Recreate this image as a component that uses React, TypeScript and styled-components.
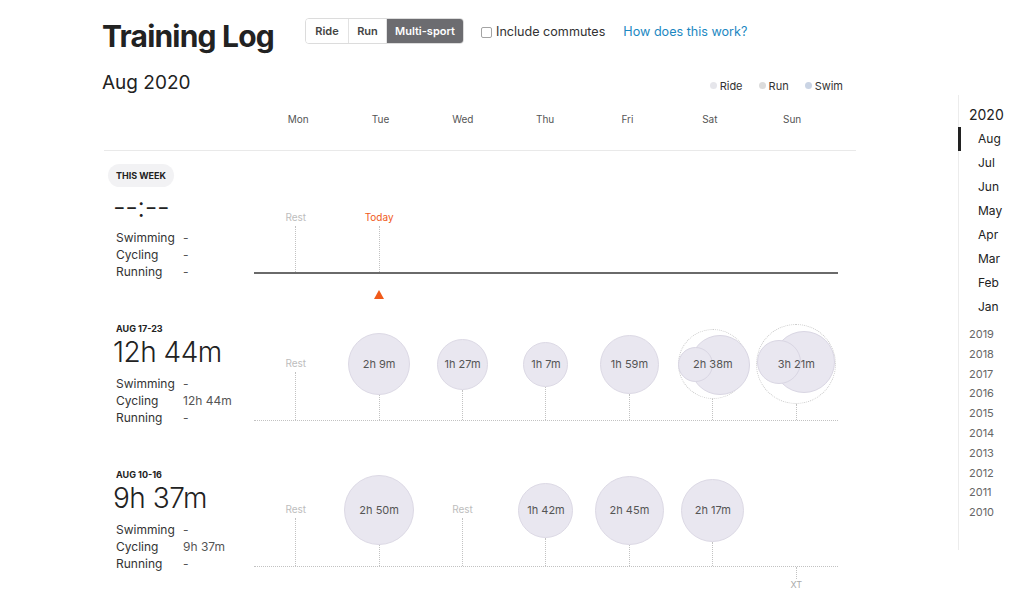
import React from 'react';
import styled, { createGlobalStyle } from 'styled-components';

const GlobalStyle = createGlobalStyle`
  html, body { margin: 0; padding: 0; background: #fff; }
  body { font-family: Inter, "Noto Sans", sans-serif; color: #333; -webkit-font-smoothing: antialiased; }
  * { box-sizing: border-box; }
`;

const Page = styled.div`
  display: flex;
  width: 1024px;
  height: 594px;
  overflow: hidden;
`;

const Main = styled.main`
  flex: none;
  width: 856px;
  margin-left: 102px;
`;

const TitleRow = styled.div`
  display: flex;
  align-items: flex-start;
  padding-top: 16px;
  height: 56px;
`;

const Title = styled.h1`
  flex: 0 0 203px;
  margin: 0;
  font-size: 30px;
  line-height: 40px;
  font-weight: 700;
  letter-spacing: -0.8px;
  color: #222;
  white-space: nowrap;
`;

const Tabs = styled.div`
  display: flex;
  margin-top: 2px;
  height: 26px;
  border: 1px solid #dcdcdc;
  border-radius: 4px;
  overflow: hidden;
`;

const Tab = styled.button<{ $active?: boolean; $w: number }>`
  width: ${p => p.$w}px;
  border: none;
  border-left: 1px solid #e2e2e2;
  &:first-child { border-left: none; }
  background: ${p => (p.$active ? '#6c6c70' : '#fff')};
  color: ${p => (p.$active ? '#fff' : '#444')};
  font-family: inherit;
  font-size: 11px;
  font-weight: 600;
  padding: 0;
`;

const Check = styled.label`
  display: flex;
  align-items: center;
  margin: 8px 0 0 17px;
  font-size: 12.6px;
  line-height: 16px;
  color: #333;
`;

const Box = styled.span`
  width: 11px;
  height: 11px;
  border: 1px solid #a4a4a4;
  border-radius: 2px;
  margin-right: 4px;
`;

const HelpLink = styled.a`
  margin: 8px 0 0 18px;
  font-size: 12.6px;
  line-height: 16px;
  color: #1c88c2;
  text-decoration: none;
`;

const MonthRow = styled.div`
  display: flex;
  justify-content: space-between;
  align-items: baseline;
  margin-top: 15px;
  padding-right: 13px;
  width: 754px;
`;

const MonthTitle = styled.h2`
  margin: 0;
  font-size: 19px;
  line-height: 24px;
  font-weight: 400;
  color: #222;
`;

const Legend = styled.div`
  display: flex;
  gap: 16px;
  font-size: 11px;
  color: #333;
`;

const LegendItem = styled.span`
  display: flex;
  align-items: center;
  gap: 3px;
`;

const Dot = styled.span<{ $c: string }>`
  width: 7px;
  height: 7px;
  border-radius: 50%;
  background: ${p => p.$c};
`;

const DaysRow = styled.div`
  display: grid;
  grid-template-columns: repeat(7, 82.33px);
  margin-left: 2px;
  width: 752px;
  padding: 17px 0 24px 153px;
  border-bottom: 1px solid #e9e9e9;
  font-size: 10px;
  line-height: 14px;
  color: #555;
  text-align: center;
`;

const WeekBlock = styled.section<{ $h: number }>`
  display: grid;
  grid-template-columns: 150px 584px;
  align-items: start;
  margin-left: 2px;
  height: ${p => p.$h}px;
`;

const Summary = styled.div<{ $top: number }>`
  padding: ${p => p.$top}px 0 0 12px;
`;

const Pill = styled.div`
  display: inline-block;
  margin-left: -8px;
  padding: 0 8px;
  height: 23px;
  line-height: 23px;
  border-radius: 12px;
  background: #f2f2f4;
  font-size: 9px;
  font-weight: 700;
  color: #222;
  text-transform: uppercase;
`;

const RangeLabel = styled.div`
  font-size: 9px;
  line-height: 11px;
  font-weight: 700;
  color: #222;
  text-transform: uppercase;
`;

const BigTime = styled.div<{ $mt: number }>`
  margin-top: ${p => p.$mt}px;
  margin-left: -3px;
  font-size: 28px;
  line-height: 32px;
  font-weight: 300;
  color: #222;
  letter-spacing: -0.5px;
`;

const Stats = styled.div<{ $mt: number }>`
  display: grid;
  grid-template-columns: 67px auto;
  margin-top: ${p => p.$mt}px;
  font-size: 12px;
  line-height: 17px;
  color: #333;
`;

const StatValue = styled.span`
  color: #555;
`;

const Chart = styled.div``;

const Zone = styled.div<{ $h: number; $solid?: boolean }>`
  display: grid;
  grid-template-columns: repeat(7, 1fr);
  height: ${p => p.$h}px;
  border-bottom: ${p => (p.$solid ? '2px solid #6a6a6a' : '1px dotted #c2c2c2')};
`;

const TopCol = styled.div`
  display: flex;
  flex-direction: column;
  align-items: center;
  padding-top: 59px;
`;

const MidCol = styled.div`
  display: grid;
  grid-template-rows: 1fr auto 1fr;
  justify-items: center;
  height: 100%;
`;

const Stem = styled.div<{ $h?: number }>`
  width: 0;
  height: ${p => (p.$h ? `${p.$h}px` : '100%')};
  flex: ${p => (p.$h ? 'none' : '1')};
  border-left: 1px dotted #c2c2c2;
`;

const DayLabel = styled.div<{ $today?: boolean }>`
  font-size: 10px;
  line-height: 14px;
  color: ${p => (p.$today ? '#f05a1a' : '#bdbdbd')};
  margin-bottom: 2px;
`;

const Bubble = styled.div<{ $d: number }>`
  display: flex;
  align-items: center;
  justify-content: center;
  width: ${p => p.$d}px;
  height: ${p => p.$d}px;
  border-radius: 50%;
  background: #e9e7f0;
  border: 1px solid #dcd9e5;
  font-size: 11px;
  color: #555;
  white-space: nowrap;
`;

const Cluster = styled.div<{ $d: number }>`
  position: relative;
  width: ${p => p.$d}px;
  height: ${p => p.$d}px;
  border-radius: 50%;
  border: 1px dotted #c8c8c8;
`;

const ClusterPart = styled.div<{ $d: number; $x: number; $y: number }>`
  position: absolute;
  left: ${p => p.$x}px;
  top: ${p => p.$y}px;
  width: ${p => p.$d}px;
  height: ${p => p.$d}px;
  border-radius: 50%;
  background: #e9e7f0;
  border: 1px solid #d9d6e3;
`;

const ClusterText = styled.div`
  position: absolute;
  inset: 0;
  display: flex;
  align-items: center;
  justify-content: center;
  font-size: 11px;
  color: #555;
  white-space: nowrap;
`;

const Below = styled.div<{ $mt: number }>`
  display: grid;
  grid-template-columns: repeat(7, 1fr);
  margin-top: ${p => p.$mt}px;
`;

const BelowCol = styled.div`
  display: flex;
  flex-direction: column;
  align-items: center;
`;

const Triangle = styled.div`
  width: 0;
  height: 0;
  border-left: 5.5px solid transparent;
  border-right: 5.5px solid transparent;
  border-bottom: 9px solid #f05a1a;
`;

const XT = styled.div`
  font-size: 9px;
  line-height: 12px;
  color: #aaa;
`;

const Sidebar = styled.nav`
  flex: none;
  width: 66px;
  height: 455px;
  margin-top: 95px;
  padding-top: 11px;
  border-left: 1px solid #ececec;
`;

const YearHead = styled.div`
  padding-left: 10px;
  font-size: 14px;
  line-height: 18px;
  color: #222;
`;

const MonthList = styled.ul`
  list-style: none;
  margin: 3px 0 0;
  padding: 0;
`;

const MonthItem = styled.li<{ $active?: boolean }>`
  margin-left: -1px;
  padding-left: 17px;
  border-left: 3px solid ${p => (p.$active ? '#222' : 'transparent')};
  font-size: 12px;
  line-height: 24px;
  color: #222;
`;

const YearList = styled.ul`
  list-style: none;
  margin: 6px 0 0;
  padding: 0;
`;

const YearItem = styled.li`
  padding-left: 10px;
  font-size: 11px;
  line-height: 19.8px;
  color: #666;
`;

type Day =
  | null
  | { kind: 'rest' }
  | { kind: 'bubble'; label: string; d: number }
  | { kind: 'cluster'; label: string; d: number; parts: { d: number; dx: number; dy: number }[] };

const DayCell: React.FC<{ day: Day }> = ({ day }) => {
  if (!day) return <div />;
  let mid: React.ReactNode;
  if (day.kind === 'rest') mid = <DayLabel>Rest</DayLabel>;
  else if (day.kind === 'bubble') mid = <Bubble $d={day.d}>{day.label}</Bubble>;
  else
    mid = (
      <Cluster $d={day.d}>
        {day.parts.map((p, i) => (
          <ClusterPart key={i} $d={p.d} $x={day.d / 2 - 1 + p.dx - p.d / 2} $y={day.d / 2 - 1 + p.dy - p.d / 2} />
        ))}
        <ClusterText>{day.label}</ClusterText>
      </Cluster>
    );
  return (
    <MidCol>
      <span />
      {mid}
      <Stem />
    </MidCol>
  );
};

const Stat: React.FC<{ swim: string; cycle: string; run: string; mt: number }> = ({ swim, cycle, run, mt }) => (
  <Stats $mt={mt}>
    <span>Swimming</span>
    <StatValue>{swim}</StatValue>
    <span>Cycling</span>
    <StatValue>{cycle}</StatValue>
    <span>Running</span>
    <StatValue>{run}</StatValue>
  </Stats>
);

const week2: Day[] = [
  { kind: 'rest' },
  { kind: 'bubble', label: '2h 9m', d: 62 },
  { kind: 'bubble', label: '1h 27m', d: 51 },
  { kind: 'bubble', label: '1h 7m', d: 45 },
  { kind: 'bubble', label: '1h 59m', d: 59 },
  {
    kind: 'cluster',
    label: '2h 38m',
    d: 70,
    parts: [
      { d: 60, dx: 7, dy: 1 },
      { d: 35, dx: -17, dy: 0 },
    ],
  },
  {
    kind: 'cluster',
    label: '3h 21m',
    d: 80,
    parts: [
      { d: 62, dx: 8, dy: -2 },
      { d: 44, dx: -17, dy: -2 },
    ],
  },
];

const week3: Day[] = [
  { kind: 'rest' },
  { kind: 'bubble', label: '2h 50m', d: 70 },
  { kind: 'rest' },
  { kind: 'bubble', label: '1h 42m', d: 55 },
  { kind: 'bubble', label: '2h 45m', d: 69 },
  { kind: 'bubble', label: '2h 17m', d: 63 },
  null,
];

const days = ['Mon', 'Tue', 'Wed', 'Thu', 'Fri', 'Sat', 'Sun'];
const months = ['Aug', 'Jul', 'Jun', 'May', 'Apr', 'Mar', 'Feb', 'Jan'];
const years = ['2019', '2018', '2017', '2016', '2015', '2014', '2013', '2012', '2011', '2010'];

export default function App() {
  return (
    <>
      <GlobalStyle />
      <Page>
        <Main>
          <TitleRow>
            <Title>Training Log</Title>
            <Tabs>
              <Tab $w={42}>Ride</Tab>
              <Tab $w={38}>Run</Tab>
              <Tab $w={77} $active>
                Multi-sport
              </Tab>
            </Tabs>
            <Check>
              <Box />
              Include commutes
            </Check>
            <HelpLink href="#">How does this work?</HelpLink>
          </TitleRow>

          <MonthRow>
            <MonthTitle>Aug 2020</MonthTitle>
            <Legend>
              <LegendItem>
                <Dot $c="#e6e6eb" />
                Ride
              </LegendItem>
              <LegendItem>
                <Dot $c="#dcdcdc" />
                Run
              </LegendItem>
              <LegendItem>
                <Dot $c="#cad4e4" />
                Swim
              </LegendItem>
            </Legend>
          </MonthRow>

          <DaysRow>
            {days.map(d => (
              <span key={d}>{d}</span>
            ))}
          </DaysRow>

          <WeekBlock $h={157}>
            <Summary $top={12}>
              <Pill>This week</Pill>
              <BigTime $mt={4}>--:--</BigTime>
              <Stat swim="-" cycle="-" run="-" mt={6} />
            </Summary>
            <Chart>
              <Zone $h={123} $solid>
                <TopCol>
                  <DayLabel>Rest</DayLabel>
                  <Stem />
                </TopCol>
                <TopCol>
                  <DayLabel $today>Today</DayLabel>
                  <Stem />
                </TopCol>
                <div />
                <div />
                <div />
                <div />
                <div />
              </Zone>
              <Below $mt={16}>
                <div />
                <BelowCol>
                  <Triangle />
                </BelowCol>
              </Below>
            </Chart>
          </WeekBlock>

          <WeekBlock $h={146}>
            <Summary $top={15}>
              <RangeLabel>Aug 17-23</RangeLabel>
              <BigTime $mt={2}>12h 44m</BigTime>
              <Stat swim="-" cycle="12h 44m" run="-" mt={7} />
            </Summary>
            <Chart>
              <Zone $h={113}>
                {week2.map((d, i) => (
                  <DayCell key={i} day={d} />
                ))}
              </Zone>
            </Chart>
          </WeekBlock>

          <WeekBlock $h={146}>
            <Summary $top={15}>
              <RangeLabel>Aug 10-16</RangeLabel>
              <BigTime $mt={2}>9h 37m</BigTime>
              <Stat swim="-" cycle="9h 37m" run="-" mt={7} />
            </Summary>
            <Chart>
              <Zone $h={113}>
                {week3.map((d, i) => (
                  <DayCell key={i} day={d} />
                ))}
              </Zone>
              <Below $mt={0}>
                <div />
                <div />
                <div />
                <div />
                <div />
                <div />
                <BelowCol>
                  <Stem $h={12} />
                  <XT>XT</XT>
                </BelowCol>
              </Below>
            </Chart>
          </WeekBlock>
        </Main>

        <Sidebar>
          <YearHead>2020</YearHead>
          <MonthList>
            {months.map(m => (
              <MonthItem key={m} $active={m === 'Aug'}>
                {m}
              </MonthItem>
            ))}
          </MonthList>
          <YearList>
            {years.map(y => (
              <YearItem key={y}>{y}</YearItem>
            ))}
          </YearList>
        </Sidebar>
      </Page>
    </>
  );
}
